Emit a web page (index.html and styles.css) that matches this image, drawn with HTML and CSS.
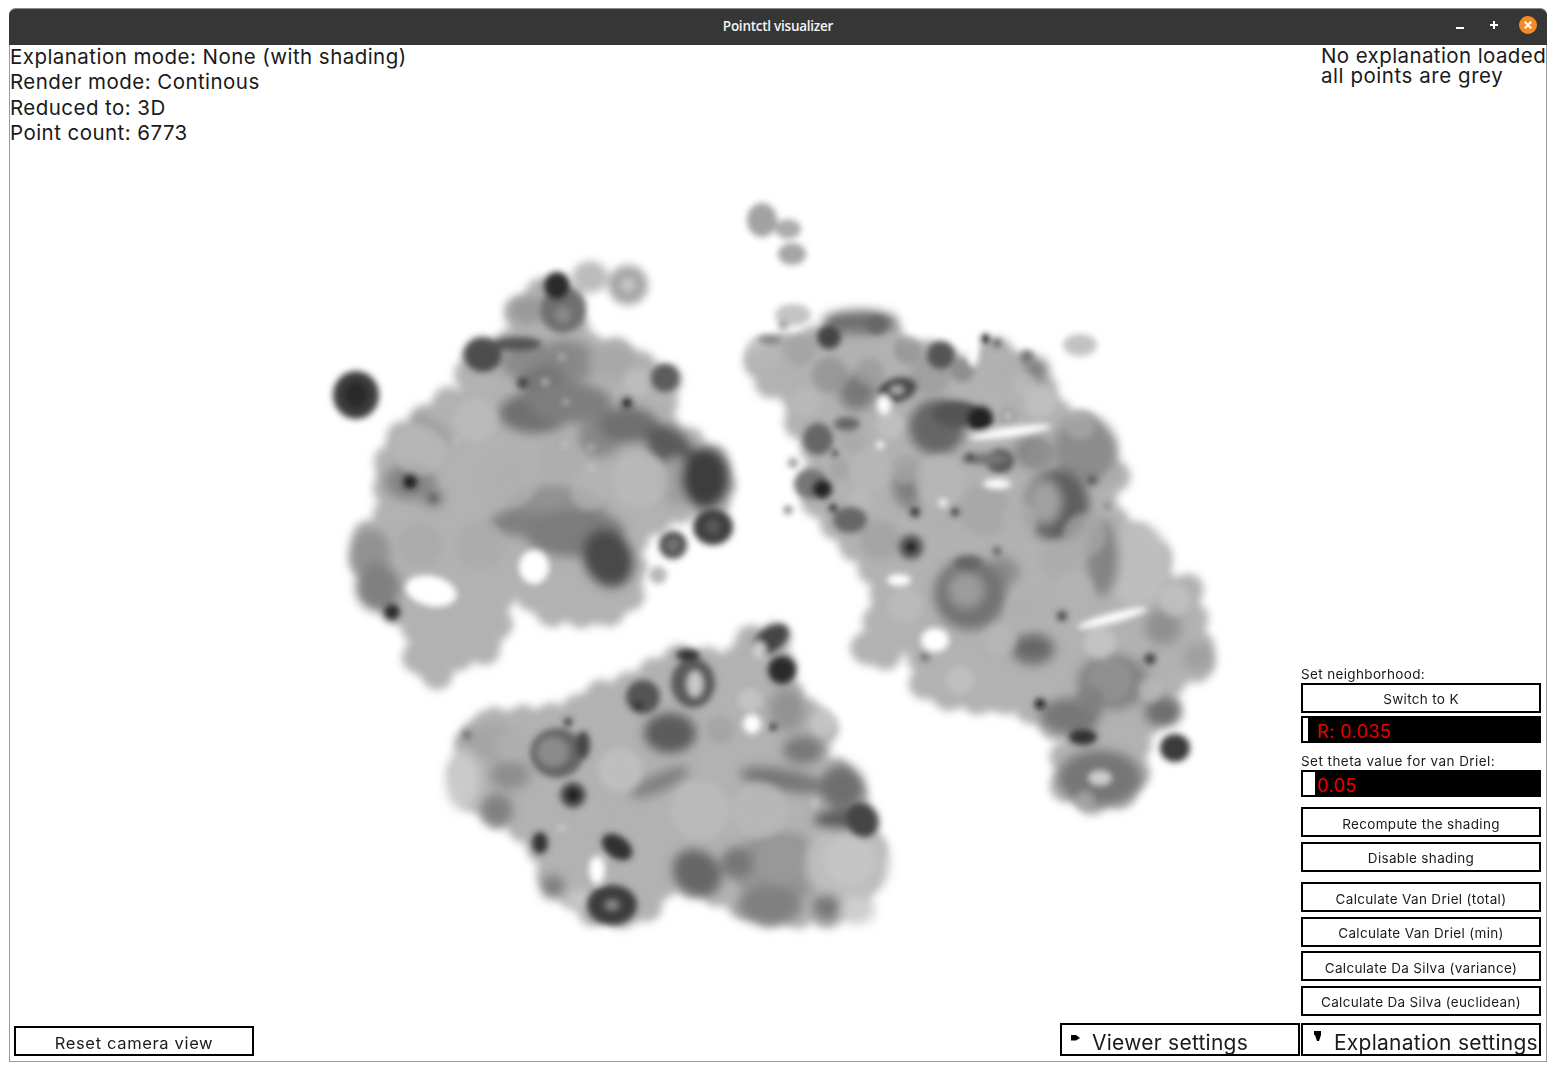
FILE: index.html
```html
<!DOCTYPE html>
<html lang="en">
<head>
<meta charset="utf-8">
<title>Pointctl visualizer</title>
<link rel="stylesheet" href="styles.css">
</head>
<body>
<div class="window">
  <header class="titlebar">
    <span class="title">Pointctl visualizer</span>
    <div class="controls">
      <svg class="ctl" width="14" height="14" viewBox="0 0 14 14"><rect x="3" y="9" width="8" height="2" fill="#fff"/></svg>
      <svg class="ctl" width="14" height="14" viewBox="0 0 14 14"><path d="M3 7h8M7 3v8" stroke="#fff" stroke-width="2"/></svg>
      <svg class="ctl close" width="18" height="18" viewBox="0 0 18 18"><circle cx="9" cy="9" r="9" fill="#f48a21"/><path d="M5.800 5.800l6.400 6.400M12.200 5.800l-6.400 6.400" stroke="#fff" stroke-width="2"/></svg>
    </div>
  </header>
  <main class="viewport">
    <svg class="scatter" viewBox="10 45 1536 1016" width="1536" height="1016" aria-hidden="true">
      <defs>
        <filter id="edge" x="-5%" y="-5%" width="110%" height="110%"><feGaussianBlur stdDeviation="4"/></filter>
        <filter id="soft" x="-5%" y="-5%" width="110%" height="110%"><feGaussianBlur stdDeviation="5.500"/></filter>
        <filter id="crisp" x="-5%" y="-5%" width="110%" height="110%"><feGaussianBlur stdDeviation="3.200"/></filter>
        <g id="lobes">
          <path transform="translate(520 480) scale(.93) translate(-520 -480)" d="M520 300L545 278L575 290L580 335L630 345L660 365L680 375L678 395L665 405L675 425L710 445L735 465L735 505L690 510L660 525L640 545L640 590L635 615L600 625L570 620L545 622L530 600L510 580L500 590L495 640L480 665L445 670L430 690L410 675L410 640L395 625L375 610L355 575L352 545L375 525L385 505L375 480L385 440L420 415L445 395L480 385L465 365L470 345L510 335L530 325L512 310Z"/>
          <path transform="translate(990 560) scale(.94) translate(-990 -560)" d="M745 350L775 333L795 330L830 320L885 318L880 345L905 340L940 345L965 370L975 395L985 335L1010 345L1040 370L1060 405L1090 420L1110 450L1125 475L1105 500L1130 530L1165 550L1172 590L1200 590L1210 650L1220 670L1190 680L1175 695L1175 725L1145 735L1145 780L1140 805L1100 815L1070 800L1070 770L1090 750L1060 735L1030 715L1040 695L1000 710L950 705L920 695L925 670L895 640L885 660L855 660L870 630L880 590L860 560L825 520L800 490L810 465L805 440L785 410L785 385L755 370Z"/>
          <path transform="translate(660 775) scale(.92) translate(-660 -775)" d="M480 718L560 712L590 690L625 680L680 650L740 655L755 630L785 622L795 680L810 705L838 715L835 745L810 765L850 772L878 810L890 860L875 905L850 925L800 925L760 920L720 900L690 890L665 890L640 925L590 925L570 905L545 890L530 850L505 825L470 810L447 785L455 730Z"/>
        </g>
      </defs>
      <!-- lumpy silhouette of the three clusters -->
      <g filter="url(#edge)">
        <use href="#lobes" fill="#b2b2b2" stroke="#b2b2b2" stroke-width="34" stroke-linecap="round" stroke-dasharray="0 31"/>
        <use href="#lobes" fill="#b2b2b2" stroke="#b2b2b2" stroke-width="24" stroke-linecap="round" stroke-dasharray="0 19" stroke-dashoffset="7"/>
        <ellipse cx="590" cy="277" rx="18" ry="16" fill="#bcbcbc"/>
        <ellipse cx="628" cy="285" rx="20" ry="20" fill="#a8a8a8"/>
      </g>
      <!-- tonal bodies -->
      <g filter="url(#soft)">
        <ellipse cx="527" cy="310" rx="18" ry="14" fill="#9a9a9a"/>
        <ellipse cx="533" cy="362" rx="32" ry="20" fill="#8a8a8a"/>
        <ellipse cx="565" cy="362" rx="32" ry="22" fill="#888"/>
        <ellipse cx="613" cy="362" rx="25" ry="18" fill="#a8a8a8"/>
        <ellipse cx="545" cy="382" rx="22" ry="18" fill="#777"/>
        <ellipse cx="535" cy="413" rx="36" ry="20" fill="#6f6f6f"/>
        <ellipse cx="570" cy="403" rx="42" ry="20" fill="#7e7e7e"/>
        <ellipse cx="600" cy="437" rx="22" ry="20" fill="#888"/>
        <ellipse cx="628" cy="425" rx="30" ry="18" fill="#707070"/>
        <ellipse cx="670" cy="447" rx="28" ry="18" fill="#5a5a5a" transform="rotate(40 670 447)"/>
        <ellipse cx="555" cy="510" rx="50" ry="25" fill="#919191"/>
        <ellipse cx="520" cy="523" rx="30" ry="13" fill="#808080"/>
        <ellipse cx="575" cy="533" rx="50" ry="24" fill="#7c7c7c"/>
        <ellipse cx="608" cy="558" rx="24" ry="30" fill="#4a4a4a" transform="rotate(-25 608 558)"/>
        <ellipse cx="370" cy="553" rx="20" ry="24" fill="#919191"/>
        <ellipse cx="378" cy="587" rx="22" ry="24" fill="#808080"/>
        <ellipse cx="677" cy="482" rx="18" ry="25" fill="#a0a0a0"/>
        <ellipse cx="705" cy="478" rx="24" ry="30" fill="#3e3e3e"/>
        <ellipse cx="410" cy="482" rx="26" ry="18" fill="#858585"/>
        <ellipse cx="433" cy="498" rx="12" ry="10" fill="#8a8a8a"/>
        <ellipse cx="432" cy="428" rx="24" ry="6" fill="#999" transform="rotate(35 432 428)"/>
        <ellipse cx="860" cy="322" rx="38" ry="12" fill="#707070"/>
        <ellipse cx="857" cy="392" rx="18" ry="18" fill="#787878"/>
        <ellipse cx="907" cy="484" rx="14" ry="24" fill="#808080"/>
        <ellipse cx="937" cy="427" rx="28" ry="28" fill="#666"/>
        <ellipse cx="1037" cy="370" rx="12" ry="12" fill="#808080"/>
        <ellipse cx="1085" cy="450" rx="32" ry="34" fill="#8c8c8c"/>
        <ellipse cx="1032" cy="452" rx="18" ry="16" fill="#868686"/>
        <ellipse cx="1057" cy="505" rx="32" ry="36" fill="#5e5e5e"/>
        <ellipse cx="1045" cy="502" rx="16" ry="22" fill="#a2a2a2"/>
        <ellipse cx="1137" cy="565" rx="32" ry="42" fill="#bebebe"/>
        <ellipse cx="1103" cy="558" rx="16" ry="38" fill="#848484"/>
        <ellipse cx="1003" cy="572" rx="16" ry="15" fill="#8a8a8a"/>
        <ellipse cx="970" cy="594" rx="36" ry="36" fill="#727272"/>
        <ellipse cx="966" cy="590" rx="18" ry="18" fill="#9c9c9c"/>
        <ellipse cx="1033" cy="649" rx="22" ry="16" fill="#707070"/>
        <ellipse cx="1163" cy="627" rx="18" ry="18" fill="#909090"/>
        <ellipse cx="1198" cy="657" rx="16" ry="14" fill="#a0a0a0"/>
        <ellipse cx="1113" cy="682" rx="36" ry="28" fill="#848484"/>
        <ellipse cx="1070" cy="716" rx="30" ry="18" fill="#777"/>
        <ellipse cx="1163" cy="712" rx="18" ry="15" fill="#6e6e6e"/>
        <ellipse cx="1100" cy="778" rx="42" ry="28" fill="#767676"/>
        <ellipse cx="490" cy="742" rx="30" ry="18" fill="#a4a4a4"/>
        <ellipse cx="463" cy="780" rx="17" ry="30" fill="#cacaca"/>
        <ellipse cx="497" cy="810" rx="16" ry="16" fill="#808080"/>
        <ellipse cx="510" cy="775" rx="20" ry="15" fill="#8e8e8e"/>
        <ellipse cx="553" cy="887" rx="12" ry="12" fill="#808080"/>
        <ellipse cx="580" cy="900" rx="15" ry="10" fill="#c8c8c8"/>
        <ellipse cx="787" cy="710" rx="18" ry="22" fill="#939393"/>
        <ellipse cx="803" cy="750" rx="20" ry="14" fill="#787878"/>
        <ellipse cx="780" cy="867" rx="48" ry="35" fill="#949494"/>
        <ellipse cx="847" cy="863" rx="42" ry="40" fill="#bebebe"/>
        <ellipse cx="857" cy="910" rx="18" ry="14" fill="#cfcfcf"/>
        <ellipse cx="737" cy="863" rx="16" ry="16" fill="#767676"/>
        <ellipse cx="770" cy="905" rx="32" ry="20" fill="#808080"/>
        <ellipse cx="827" cy="907" rx="14" ry="13" fill="#777"/>
        <ellipse cx="697" cy="873" rx="26" ry="22" fill="#666" transform="rotate(40 697 873)"/>
        <ellipse cx="783" cy="780" rx="44" ry="11" fill="#777" transform="rotate(10 783 780)"/>
        <ellipse cx="660" cy="782" rx="32" ry="9" fill="#808080" transform="rotate(-25 660 782)"/>
        <ellipse cx="842" cy="787" rx="22" ry="22" fill="#6e6e6e"/>
        <ellipse cx="840" cy="820" rx="26" ry="10" fill="#5c5c5c"/>
        <ellipse cx="670" cy="733" rx="26" ry="20" fill="#5c5c5c"/>
      </g>
      <!-- mottling: overlapping discs -->
      <g filter="url(#crisp)" opacity=".7">
        <circle cx="763" cy="353" r="18" fill="#b8b8b8"/><circle cx="800" cy="350" r="16" fill="#a0a0a0"/><circle cx="830" cy="375" r="18" fill="#8f8f8f"/><circle cx="805" cy="402" r="15" fill="#bbb"/><circle cx="870" cy="372" r="14" fill="#999"/><circle cx="908" cy="350" r="14" fill="#909090"/><circle cx="930" cy="375" r="20" fill="#9a9a9a"/><circle cx="962" cy="370" r="12" fill="#808080"/><circle cx="890" cy="425" r="14" fill="#c4c4c4"/><circle cx="870" cy="470" r="22" fill="#b8b8b8"/><circle cx="905" cy="470" r="14" fill="#aaa"/><circle cx="940" cy="480" r="25" fill="#b8b8b8"/><circle cx="880" cy="540" r="20" fill="#a0a0a0"/><circle cx="840" cy="470" r="10" fill="#a0a0a0"/><circle cx="860" cy="500" r="12" fill="#bbb"/><circle cx="1005" cy="370" r="18" fill="#b0b0b0"/><circle cx="1025" cy="385" r="12" fill="#bbb"/><circle cx="1040" cy="402" r="16" fill="#c4c4c4"/><circle cx="1080" cy="425" r="15" fill="#aaa"/><circle cx="1040" cy="455" r="14" fill="#909090"/><circle cx="985" cy="510" r="26" fill="#a4a4a4"/><circle cx="945" cy="525" r="18" fill="#b0b0b0"/><circle cx="1020" cy="520" r="18" fill="#b0b0b0"/><circle cx="1085" cy="535" r="22" fill="#a8a8a8"/><circle cx="1060" cy="560" r="20" fill="#aaa"/><circle cx="1025" cy="610" r="20" fill="#b0b0b0"/><circle cx="1075" cy="590" r="18" fill="#b4b4b4"/><circle cx="1000" cy="640" r="16" fill="#b8b8b8"/><circle cx="905" cy="605" r="18" fill="#bdbdbd"/><circle cx="960" cy="680" r="14" fill="#c4c4c4"/><circle cx="1110" cy="680" r="22" fill="#959595"/><circle cx="1150" cy="690" r="12" fill="#bbb"/><circle cx="1090" cy="700" r="14" fill="#808080"/><circle cx="1175" cy="600" r="16" fill="#c4c4c4"/><circle cx="1100" cy="643" r="16" fill="#cacaca"/><circle cx="1085" cy="800" r="10" fill="#aaa"/>
        <circle cx="420" cy="450" r="26" fill="#b8b8b8"/><circle cx="475" cy="420" r="22" fill="#bdbdbd"/><circle cx="510" cy="480" r="28" fill="#b0b0b0"/><circle cx="560" cy="460" r="22" fill="#ababab"/><circle cx="640" cy="480" r="28" fill="#bbb"/><circle cx="590" cy="490" r="20" fill="#b4b4b4"/><circle cx="420" cy="545" r="22" fill="#a8a8a8"/><circle cx="480" cy="545" r="25" fill="#aaa"/><circle cx="637" cy="382" r="14" fill="#c0c0c0"/>
        <circle cx="620" cy="770" r="22" fill="#c4c4c4"/><circle cx="700" cy="810" r="30" fill="#bdbdbd"/><circle cx="760" cy="810" r="28" fill="#bababa"/><circle cx="590" cy="815" r="14" fill="#b4b4b4"/><circle cx="850" cy="860" r="25" fill="#c8c8c8"/><circle cx="780" cy="860" r="22" fill="#9a9a9a"/><circle cx="510" cy="745" r="16" fill="#b0b0b0"/><circle cx="720" cy="730" r="14" fill="#a0a0a0"/><circle cx="750" cy="700" r="12" fill="#cacaca"/><circle cx="823" cy="723" r="13" fill="#cacaca"/>
      </g>
      <!-- isolated soft blobs -->
      <g filter="url(#crisp)">
        <ellipse cx="762" cy="220" rx="15" ry="17" fill="#a2a2a2"/>
        <ellipse cx="788" cy="229" rx="13" ry="10" fill="#ababab"/>
        <ellipse cx="792" cy="254" rx="14" ry="11" fill="#a6a6a6"/>
        <ellipse cx="793" cy="315" rx="18" ry="11" fill="#c4c4c4"/>
        <ellipse cx="1080" cy="345" rx="17" ry="11" fill="#c2c2c2"/>
        <ellipse cx="658" cy="575" rx="9" ry="9" fill="#b8b8b8"/>
      </g>
      <!-- dark details -->
      <g filter="url(#crisp)">
        <ellipse cx="356" cy="395" rx="23" ry="24" fill="#3c3c3c"/>
        <ellipse cx="356" cy="395" rx="12" ry="14" fill="#2c2c2c"/>
        <ellipse cx="483" cy="355" rx="19" ry="17" fill="#4e4e4e"/>
        <ellipse cx="517" cy="344" rx="24" ry="7" fill="#555"/>
        <ellipse cx="563" cy="310" rx="23" ry="23" fill="#6f6f6f"/>
        <ellipse cx="557" cy="286" rx="13" ry="14" fill="#2c2c2c"/>
        <ellipse cx="563" cy="315" rx="8" ry="8" fill="#888"/>
        <ellipse cx="628" cy="285" rx="7" ry="7" fill="#c6c6c6"/>
        <ellipse cx="665" cy="378" rx="14" ry="14" fill="#5c5c5c"/>
        <circle cx="627" cy="403" r="5" fill="#1e1e1e"/>
        <circle cx="523" cy="383" r="6" fill="#444"/>
        <ellipse cx="713" cy="527" rx="20" ry="18" fill="#414141"/>
        <ellipse cx="713" cy="527" rx="7" ry="7" fill="#5a5a5a"/>
        <ellipse cx="673" cy="545" rx="14" ry="14" fill="#555"/>
        <ellipse cx="673" cy="545" rx="6" ry="6" fill="#777"/>
        <circle cx="410" cy="482" r="7" fill="#1e1e1e"/>
        <circle cx="392" cy="612" r="8" fill="#2b2b2b"/>
        <circle cx="433" cy="498" r="5" fill="#666"/>
        <g fill="#d4d4d4">
          <circle cx="565" cy="445" r="2.500"/><circle cx="591" cy="447" r="2.500"/><circle cx="545" cy="382" r="3"/><circle cx="562" cy="357" r="2.500"/><circle cx="591" cy="468" r="2.500"/><circle cx="456" cy="441" r="2"/><circle cx="566" cy="402" r="2.500"/>
        </g>
        <ellipse cx="431" cy="591" rx="26" ry="15" fill="#fff" transform="rotate(12 431 591)"/>
        <ellipse cx="534" cy="567" rx="15" ry="17" fill="#fff"/>
        <circle cx="783" cy="325" r="4" fill="#888"/>
        <ellipse cx="770" cy="340" rx="12" ry="5" fill="#888"/>
        <ellipse cx="877" cy="325" rx="10" ry="9" fill="#666"/>
        <circle cx="829" cy="337" r="12" fill="#444"/>
        <ellipse cx="818" cy="439" rx="15" ry="16" fill="#666"/>
        <circle cx="835" cy="453" r="3" fill="#222"/>
        <ellipse cx="852" cy="440" rx="13" ry="13" fill="#aaa"/>
        <ellipse cx="847" cy="424" rx="13" ry="7" fill="#666"/>
        <circle cx="793" cy="463" r="5" fill="#999"/>
        <circle cx="788" cy="510" r="4" fill="#777"/>
        <ellipse cx="811" cy="484" rx="17" ry="15" fill="#777"/>
        <circle cx="822" cy="489" r="10" fill="#222"/>
        <circle cx="833" cy="508" r="4" fill="#222"/>
        <ellipse cx="850" cy="520" rx="17" ry="13" fill="#666"/>
        <circle cx="911" cy="547" r="13" fill="#666"/>
        <circle cx="911" cy="547" r="7" fill="#222"/>
        <circle cx="915" cy="512" r="5" fill="#333"/>
        <circle cx="941" cy="355" r="14" fill="#555"/>
        <ellipse cx="897" cy="390" rx="20" ry="12" fill="#484848" transform="rotate(-15 897 390)"/>
        <ellipse cx="897" cy="390" rx="7" ry="4" fill="#b4b4b4"/>
        <ellipse cx="957" cy="414" rx="25" ry="13" fill="#555"/>
        <circle cx="980" cy="419" r="13" fill="#222"/>
        <circle cx="985" cy="339" r="5" fill="#222"/>
        <circle cx="997" cy="343" r="4" fill="#555"/>
        <circle cx="1027" cy="357" r="7" fill="#777"/>
        <circle cx="1008" cy="416" r="7" fill="#888"/>
        <circle cx="1008" cy="416" r="3" fill="#f0f0f0"/>
        <circle cx="1092" cy="480" r="5" fill="#555"/>
        <circle cx="1113" cy="476" r="6" fill="#aaa"/>
        <circle cx="1107" cy="506" r="3" fill="#777"/>
        <ellipse cx="1000" cy="461" rx="14" ry="12" fill="#555"/>
        <ellipse cx="985" cy="459" rx="24" ry="6" fill="#777"/>
        <circle cx="970" cy="457" r="4" fill="#333"/>
        <ellipse cx="968" cy="563" rx="14" ry="7" fill="#666"/>
        <circle cx="955" cy="512" r="4" fill="#333"/>
        <circle cx="997" cy="551" r="4" fill="#555"/>
        <circle cx="1062" cy="616" r="5" fill="#444"/>
        <circle cx="925" cy="657" r="5" fill="#777"/>
        <circle cx="1150" cy="659" r="6" fill="#444"/>
        <circle cx="1040" cy="704" r="5" fill="#111"/>
        <ellipse cx="1083" cy="737" rx="14" ry="8" fill="#333"/>
        <ellipse cx="1175" cy="748" rx="15" ry="14" fill="#3a3a3a"/>
        <ellipse cx="1100" cy="778" rx="12" ry="8" fill="#ccc"/>
        <ellipse cx="1033" cy="648" rx="12" ry="5" fill="#666"/>
        <ellipse cx="1010" cy="432" rx="42" ry="5" fill="#fff" transform="rotate(-8 1010 432)"/>
        <ellipse cx="997" cy="484" rx="14" ry="5" fill="#fff"/>
        <ellipse cx="884" cy="405" rx="7" ry="10" fill="#fff"/>
        <ellipse cx="973" cy="350" rx="6" ry="17" fill="#fff"/>
        <ellipse cx="899" cy="580" rx="12" ry="6" fill="#fff"/>
        <circle cx="880" cy="445" r="4" fill="#fff"/>
        <circle cx="943" cy="503" r="4" fill="#fff"/>
        <ellipse cx="1112" cy="618" rx="36" ry="5" fill="#fff" transform="rotate(-15 1112 618)"/>
        <ellipse cx="935" cy="640" rx="14" ry="12" fill="#fff"/>
        <ellipse cx="557" cy="753" rx="27" ry="25" fill="#666"/>
        <ellipse cx="553" cy="752" rx="16" ry="15" fill="#8a8a8a"/>
        <ellipse cx="583" cy="745" rx="7" ry="14" fill="#444"/>
        <circle cx="467" cy="735" r="4" fill="#666"/>
        <circle cx="568" cy="722" r="4" fill="#333"/>
        <circle cx="573" cy="795" r="13" fill="#555"/>
        <circle cx="573" cy="795" r="8" fill="#222"/>
        <ellipse cx="540" cy="843" rx="8" ry="11" fill="#333"/>
        <ellipse cx="617" cy="847" rx="17" ry="11" fill="#333" transform="rotate(35 617 847)"/>
        <ellipse cx="612" cy="905" rx="25" ry="20" fill="#3c3c3c"/>
        <ellipse cx="612" cy="905" rx="7" ry="5" fill="#888"/>
        <ellipse cx="643" cy="697" rx="17" ry="17" fill="#555"/>
        <circle cx="638" cy="706" r="5" fill="#333"/>
        <ellipse cx="693" cy="683" rx="22" ry="25" fill="#5c5c5c"/>
        <ellipse cx="695" cy="684" rx="8" ry="13" fill="#c8c8c8"/>
        <ellipse cx="688" cy="655" rx="12" ry="6" fill="#333"/>
        <ellipse cx="770" cy="640" rx="21" ry="12" fill="#444" transform="rotate(-35 770 640)"/>
        <ellipse cx="759" cy="650" rx="7" ry="9" fill="#ccc"/>
        <circle cx="782" cy="670" r="14" fill="#2c2c2c"/>
        <circle cx="773" cy="727" r="3" fill="#111"/>
        <ellipse cx="862" cy="820" rx="15" ry="18" fill="#444" transform="rotate(-30 862 820)"/>
        <ellipse cx="752" cy="724" rx="9" ry="10" fill="#fff"/>
        <ellipse cx="597" cy="870" rx="8" ry="14" fill="#fff"/>
        <circle cx="562" cy="828" r="3" fill="#d8d8d8"/>
        <circle cx="815" cy="803" r="3" fill="#d0d0d0"/>
      </g>
    </svg>
    <div class="top-row">
      <div class="info-left">
        <div>Explanation mode: None (with shading)</div>
        <div>Render mode: Continous</div>
        <div>Reduced to: 3D</div>
        <div>Point count: 6773</div>
      </div>
      <div class="info-right">
        <div>No explanation loaded</div>
        <div class="wider">all points are grey</div>
      </div>
    </div>
    <div class="bottom-area">
      <button class="btn reset">Reset camera view</button>
      <div class="side">
        <section class="panel">
          <label class="lbl">Set neighborhood:</label>
          <button class="btn row">Switch to K</button>
          <div class="slider"><span class="grab narrow"></span><span class="val r">R: 0.035</span></div>
          <label class="lbl theta">Set theta value for van Driel:</label>
          <div class="slider"><span class="grab wide"></span><span class="val t">0.05</span></div>
          <button class="btn row g1">Recompute the shading</button>
          <button class="btn row">Disable shading</button>
          <button class="btn row g2">Calculate Van Driel (total)</button>
          <button class="btn row">Calculate Van Driel (min)</button>
          <button class="btn row">Calculate Da Silva (variance)</button>
          <button class="btn row">Calculate Da Silva (euclidean)</button>
        </section>
        <div class="tabs">
          <button class="tab"><svg class="tri" width="11" height="8" viewBox="0 0 11 8"><path d="M1 1h5l4 3-4 2.500H1z" fill="#000"/></svg><span>Viewer settings</span></button>
          <button class="tab"><svg class="tri down" width="8" height="11" viewBox="0 0 8 11"><path d="M0 0h7v4l-2 6H3L1 4H0z" fill="#000"/></svg><span>Explanation settings</span></button>
        </div>
      </div>
    </div>
  </main>
</div>
</body>
</html>
```
FILE: styles.css
```css
* { box-sizing: border-box; }
html, body { margin: 0; padding: 0; background: #fff; }
body { width: 1556px; height: 1071px; overflow: hidden; padding: 8px 9px 9px; font-family: "Inter", "Liberation Sans", sans-serif; color: #1a1a1a; }
.window { width: 1538px; height: 1054px; display: flex; flex-direction: column; border: 1px solid #9b9b9b; border-top: 0; border-radius: 7px 7px 0 0; background: #fff; }
.titlebar { position: relative; height: 37px; margin: 0 -1px; background: #363636; border-top: 1px solid #8a8a8a; border-radius: 7px 7px 0 0; display: flex; align-items: center; justify-content: center; flex: none; }
.title { color: #f4f4f4; font: 600 13.5px "Open Sans", sans-serif; letter-spacing: -.25px; margin-top: -2px; }
.controls { position: absolute; right: 10px; top: 7px; display: flex; align-items: center; gap: 20px; }
.ctl { display: block; }
.ctl.close { margin-left: -2px; }
.viewport { position: relative; flex: 1; display: flex; flex-direction: column; justify-content: space-between; }
.scatter { position: absolute; left: 0; top: 0; }
.top-row { position: relative; display: flex; justify-content: space-between; }
.info-left { font-size: 20.500px; line-height: 25.500px; margin-top: -1.500px; letter-spacing: .45px; }
.info-right { width: 225px; font-size: 20.500px; line-height: 20px; margin-top: .5px; letter-spacing: .4px; white-space: nowrap; }
.wider { letter-spacing: .55px; }
.bottom-area { position: relative; display: flex; justify-content: space-between; align-items: flex-end; padding: 0 5px 5px 4px; }
.btn { display: flex; align-items: flex-end; justify-content: center; width: 240px; height: 30px; padding: 0 0 3px; background: #fff; border: 2px solid #000; font-family: inherit; color: #1a1a1a; }
.reset { font-size: 16.500px; letter-spacing: .65px; padding-bottom: 1px; }
.side { display: flex; flex-direction: column; align-items: flex-end; }
.panel { display: flex; flex-direction: column; width: 240px; }
.lbl { font-size: 13.500px; line-height: 16px; height: 16px; margin-bottom: 1px; letter-spacing: .35px; margin-top: -1px; }
.panel .row { font-size: 13.500px; margin-bottom: 4.500px; letter-spacing: .33px; padding-bottom: 3.500px; }
.slider { position: relative; display: flex; align-items: center; height: 27px; background: #000; padding: 2px; margin-top: -1px; }
.grab { display: block; background: #fff; height: 23px; flex: none; }
.narrow { width: 5px; }
.wide { width: 12px; }
.val { color: #e60000; font-size: 18px; line-height: 23px; margin-top: 3px; letter-spacing: .4px; }
.val.r { margin-left: 9px; }
.val.t { margin-left: 2px; }
.theta { margin-top: 10px; margin-bottom: 2px; letter-spacing: .45px; }
.g1 { margin-top: 10px; }
.g2 { margin-top: 6px; }
.tabs { display: flex; gap: 1px; margin-top: 3px; }
.tab { display: flex; align-items: center; width: 240px; height: 33px; padding: 5px 0 0; background: #fff; border: 2px solid #000; font-family: inherit; font-size: 21px; color: #1a1a1a; white-space: nowrap; letter-spacing: .25px; }
.tab .tri { flex: none; margin: -9px 11px 0 8px; }
.tab .tri.down { margin: -11px 12px 0 11px; }
```
